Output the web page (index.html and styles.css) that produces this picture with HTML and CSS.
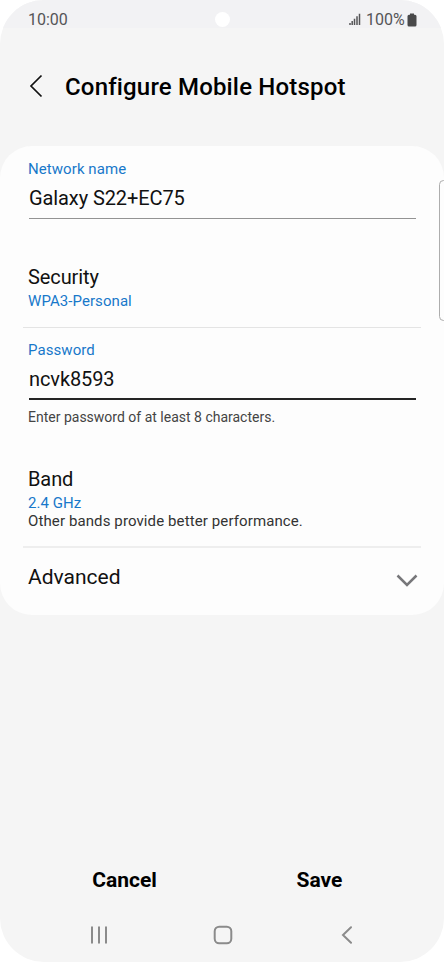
FILE: index.html
```html
<!DOCTYPE html>
<html lang="en">
<head>
<meta charset="utf-8">
<title>Configure Mobile Hotspot</title>
<link rel="stylesheet" href="styles.css">
</head>
<body>
<div class="phone">
  <div class="status">
    <span class="clock">10:00</span>
    <span class="camera"></span>
    <svg class="signal" width="12" height="13" viewBox="0 0 12 13"><path d="M1 10v2M3.2 8v4M5.5 5.8v6.2M8 3.2V12M10.5.8V12" fill="none" stroke="#555557" stroke-width="1.500"/></svg>
    <span class="percent">100%</span>
    <svg class="battery" width="10" height="14" viewBox="0 0 10 14"><path d="M3 .5h4v1.3h1q1.5 0 1.5 1.5V12q0 1.5-1.5 1.5H2Q.5 13.500.5 12V3.300Q.5 1.800 2 1.800h1z" fill="#49494a"/></svg>
  </div>
  <header class="header">
    <svg class="back" width="14" height="24" viewBox="0 0 14 24"><path d="M12.500 1.500 2 12 12.500 22.500" fill="none" stroke="#111" stroke-width="1.700"/></svg>
    <h1 class="title">Configure Mobile Hotspot</h1>
  </header>
  <main class="card">
    <section class="field">
      <div class="label name-label">Network name</div>
      <div class="value name-value">Galaxy S22+EC75</div>
    </section>
    <section class="row security">
      <div class="heading security-heading">Security</div>
      <div class="choice security-choice">WPA3-Personal</div>
    </section>
    <section class="field focused">
      <div class="label password-label">Password</div>
      <div class="value password-value">ncvk8593</div>
    </section>
    <div class="help">Enter password of at least 8 characters.</div>
    <section class="row band">
      <div class="heading">Band</div>
      <div class="choice">2.4 GHz</div>
      <div class="note">Other bands provide better performance.</div>
    </section>
    <section class="advanced">
      <span class="heading advanced-heading">Advanced</span>
      <svg class="chevron" width="22" height="14" viewBox="0 0 22 14"><path d="M1.500 1.500 11 11 20.500 1.500" fill="none" stroke="#77777a" stroke-width="2.500"/></svg>
    </section>
    <span class="edge-handle"></span>
  </main>
  <div class="actions">
    <span class="action cancel">Cancel</span>
    <span class="action save">Save</span>
  </div>
  <nav class="nav">
    <svg class="recents" width="18" height="18" viewBox="0 0 18 18"><path d="M2 1.300v15.500M9 1.300v15.500M16 1.300v15.500" fill="none" stroke="#8b8b8b" stroke-width="2" stroke-linecap="round"/></svg>
    <svg class="home" width="20" height="20" viewBox="0 0 20 20"><rect x="1.700" y="1.700" width="16.600" height="16.600" rx="4.500" fill="none" stroke="#8b8b8b" stroke-width="2"/></svg>
    <svg class="nav-back" width="12" height="18" viewBox="0 0 12 18"><path d="M10 1.200 2 9l8 7.800" fill="none" stroke="#8b8b8b" stroke-width="2" stroke-linecap="round"/></svg>
  </nav>
</div>
</body>
</html>
```

FILE: styles.css
```css
body {
  margin: 0;
  background: #fff;
  font-family: Roboto, "Liberation Sans", sans-serif;
  color: #111;
}
.phone {
  width: 444px;
  height: 962px;
  overflow: hidden;
  border-radius: 44px;
  background: #f5f5f5;
  display: flex;
  flex-direction: column;
}
.status {
  height: 28px;
  box-sizing: border-box;
  padding: 10px 27px 0 28px;
  display: flex;
  background: #f2f2f4;
  color: #555557;
  font-size: 16px;
  line-height: 20px;
}
.clock { width: 187px; }
.camera {
  width: 15px;
  height: 15px;
  margin-top: 2px;
  border-radius: 50%;
  background: #fff;
}
.signal { margin: 3px 5px 0 119px; }
.percent { width: 40px; }
.battery { margin: 3px 0 0 1px; }
.header {
  height: 118px;
  display: flex;
  align-items: center;
  padding-left: 29px;
  box-sizing: border-box;
}
.back { margin-right: 22px; margin-bottom: 2px; }
.title {
  margin: 0;
  font-size: 24px;
  font-weight: 500;
  line-height: 30px;
  letter-spacing: 0.17px;
  color: #000;
  white-space: nowrap;
}
.card {
  position: relative;
  height: 469px;
  box-sizing: border-box;
  padding: 13px 23px 0;
  border-radius: 32px;
  background: #fdfdfd;
}
.field {
  margin: 0 5px 0 6px;
  border-bottom: 1px solid #939393;
}
.label, .choice {
  color: #1878ca;
  font-size: 15px;
  line-height: 20px;
  letter-spacing: 0.07px;
}
.label { margin-left: -1px; }
.value {
  padding: 6px 0 7px;
  font-size: 20px;
  line-height: 26px;
  letter-spacing: -0.1px;
}
.heading {
  font-size: 20px;
  line-height: 26px;
  letter-spacing: -0.1px;
}
.row { padding-left: 5px; }
.security {
  margin-top: 45px;
  padding-bottom: 16px;
  border-bottom: 1px solid #e4e4e4;
}
.security-choice { padding-top: 1px; }
.focused {
  margin-top: 12px;
  border-bottom: 2px solid #252525;
}
.focused .value { padding-bottom: 6px; }
.help {
  margin: 7px 0 0 5px;
  color: #444;
  font-size: 14px;
  line-height: 20px;
}
.band {
  margin-top: 39px;
  padding-bottom: 16px;
  border-bottom: 2px solid #eee;
}
.band .choice { padding-top: 2px; line-height: 18px; }
.note {
  color: #333;
  font-size: 15px;
  line-height: 18px;
  letter-spacing: 0.11px;
}
.advanced {
  display: flex;
  justify-content: space-between;
  padding: 16px 3px 0 5px;
}
.advanced-heading { font-size: 21px; letter-spacing: 0; }
.chevron { margin-top: 10px; }
.edge-handle {
  position: absolute;
  top: 34px;
  right: -4px;
  width: 9px;
  height: 141px;
  box-sizing: border-box;
  border: 1px solid #adadad;
  border-radius: 5px;
}
.actions {
  height: 61px;
  margin-top: 236px;
  display: flex;
  padding: 16px 27px 0;
  box-sizing: border-box;
  margin-bottom: -2px;
}
.action {
  flex: 1;
  text-align: center;
  color: #000;
  font-size: 21px;
  line-height: 26px;
  font-weight: 700;
}
.nav {
  display: flex;
  align-items: center;
  height: 50px;
  padding-left: 90px;
}
.home { margin-left: 105px; }
.nav-back { margin-left: 108px; }
```
